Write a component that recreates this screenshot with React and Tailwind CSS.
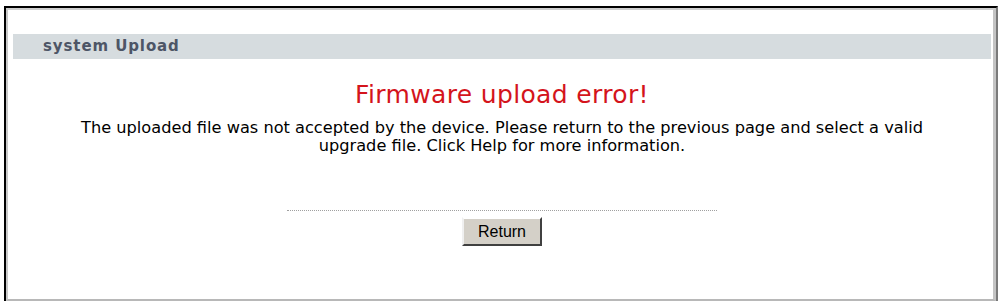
import React from 'react';

const App = () => {
  return (
    <div className="w-[1000px] h-[303px] bg-white overflow-hidden pl-[4px] pt-[6px]">
      {/* outer inset frame */}
      <div className="w-[994px] h-[295px] border-l-2 border-t-2 border-r-2 border-l-black border-t-black border-r-[#7a7a7a]">
        <div className="h-full border-l-2 border-t-2 border-r-[3px] border-b-2 border-l-[#c8c8c8] border-t-[#cfcfcf] border-r-[#c4c4c4] border-b-[#b8b8b8] pt-[24px] pl-[5px] pr-[2px]">
          <div className="h-[25px] bg-[#d6dcdf] flex items-center pl-[30px] font-['DejaVu_Sans',Verdana,sans-serif] text-[15px] tracking-[0.9px] font-bold text-[#4d5566]">
            system Upload
          </div>
          <div className="flex flex-col items-center font-['DejaVu_Sans',Verdana,sans-serif]">
            <h1 className="mt-[21px] text-[25px] tracking-[0.35px] leading-[30px] text-[#d4141c]">Firmware upload error!</h1>
            <p className="mt-[9px] text-[16.2px] leading-[18px] text-black text-center w-[870px]">
              The uploaded file was not accepted by the device. Please return to the previous page and select a valid upgrade file. Click Help for more information.
            </p>
            <div className="mt-[55px] w-[430px] border-t border-dotted border-[#a0a0a0]" />
            <button className="mt-[6px] w-[80px] h-[29px] bg-[#d4d0c8] border-2 border-t-white border-l-[#f0f0f0] border-r-[#404040] border-b-[#404040] font-['Liberation_Sans',Arial,sans-serif] text-[16px] text-black">
              Return
            </button>
          </div>
        </div>
      </div>
    </div>
  );
};

export default App;
